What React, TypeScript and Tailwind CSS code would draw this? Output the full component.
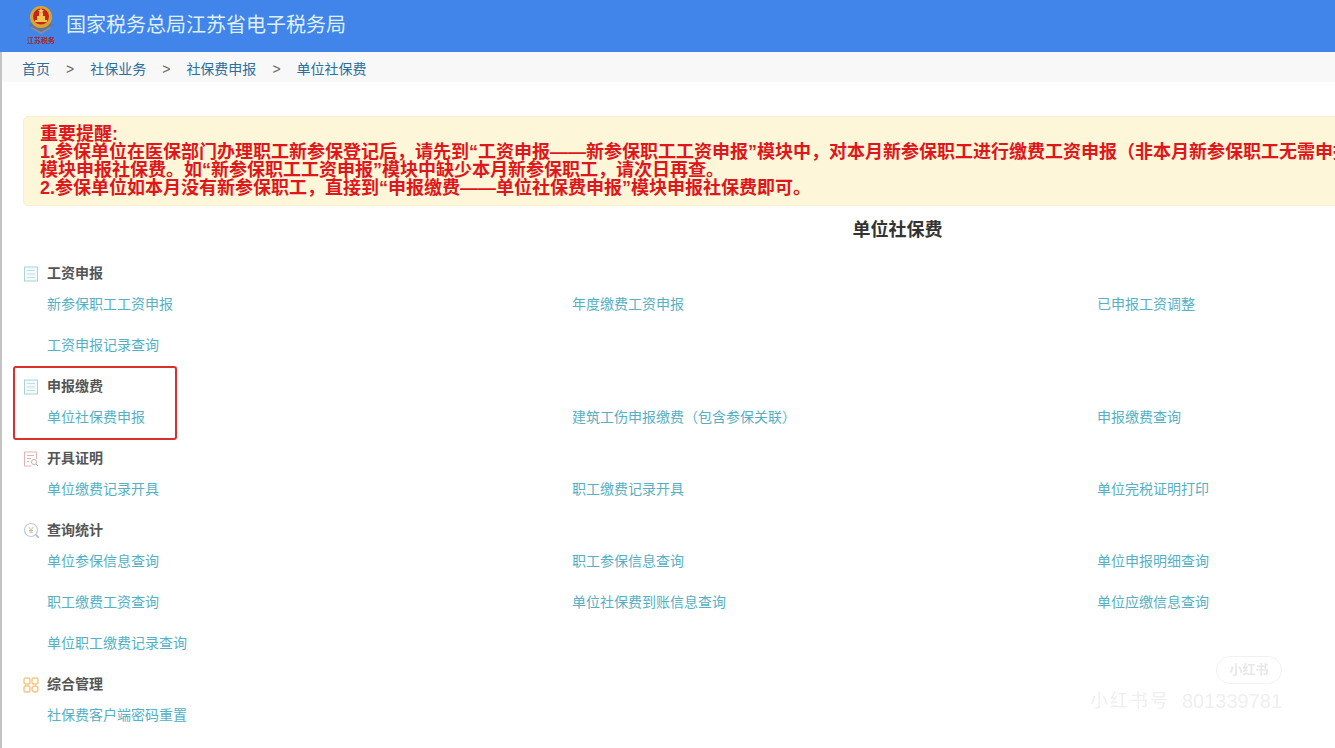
const fontStack = { fontFamily: '"Liberation Sans", "Noto Sans CJK SC", sans-serif' };

type Section = {
  title: string;
  icon: 'list' | 'cert' | 'search' | 'grid';
  links: string[];
};

const sections: Section[] = [
  {
    title: '工资申报',
    icon: 'list',
    links: ['新参保职工工资申报', '年度缴费工资申报', '已申报工资调整', '工资申报记录查询'],
  },
  {
    title: '申报缴费',
    icon: 'list',
    links: ['单位社保费申报', '建筑工伤申报缴费（包含参保关联）', '申报缴费查询'],
  },
  {
    title: '开具证明',
    icon: 'cert',
    links: ['单位缴费记录开具', '职工缴费记录开具', '单位完税证明打印'],
  },
  {
    title: '查询统计',
    icon: 'search',
    links: [
      '单位参保信息查询',
      '职工参保信息查询',
      '单位申报明细查询',
      '职工缴费工资查询',
      '单位社保费到账信息查询',
      '单位应缴信息查询',
      '单位职工缴费记录查询',
    ],
  },
  {
    title: '综合管理',
    icon: 'grid',
    links: ['社保费客户端密码重置'],
  },
];

function SectionIcon({ type }: { type: Section['icon'] }) {
  if (type === 'list') {
    return (
      <svg width="16" height="16" viewBox="0 0 16 16" fill="none" stroke="#a9d3d6" strokeWidth="1">
        <rect x="1.5" y="1" width="13" height="14" fill="#f3fafa" />
        <path d="M4 4.5h8M4 8h8M4 11.5h8" stroke="#c3dfe1" />
      </svg>
    );
  }
  if (type === 'cert') {
    return (
      <svg width="16" height="16" viewBox="0 0 16 16" fill="none" stroke="#e2b3b0" strokeWidth="1">
        <path d="M13.5 8V1H1.5v14h7" />
        <path d="M4 4.5h7M4 7.5h4M4 10.5h2" />
        <circle cx="11" cy="11" r="2.5" stroke="#d2a6a6" />
        <path d="M13 13l2 2" stroke="#b9a4a4" />
      </svg>
    );
  }
  if (type === 'search') {
    return (
      <svg width="17" height="17" viewBox="0 0 17 17" fill="none" stroke="#bccbdc" strokeWidth="1.2">
        <circle cx="8" cy="8" r="6.5" />
        <path d="M12.8 12.8l3 3" strokeWidth="1.6" stroke="#a9b7c6" />
        <path d="M5.8 5l2.2 3 2.2-3M8 8v3.5M6 8.5h4M6 10h4" stroke="#d3bb9a" strokeWidth="0.9" />
      </svg>
    );
  }
  return (
    <svg width="16" height="16" viewBox="0 0 16 16" fill="none" stroke="#f3c680" strokeWidth="1.4">
      <rect x="1" y="1" width="6" height="6" rx="1.5" />
      <rect x="9" y="1" width="6" height="6" rx="1.5" />
      <rect x="1" y="9" width="6" height="6" rx="1.5" />
      <circle cx="12" cy="12" r="3" />
    </svg>
  );
}

function Logo() {
  return (
    <div className="flex w-[30px] flex-col items-center">
      <svg width="30" height="31" viewBox="0 0 30 31">
        <path d="M5 23l10 6 10-6-2-3H7z" fill="#8b8f9c" />
        <path d="M2 20l6-3 7 5 7-5 6 3-13 7z" fill="#6d7488" />
        <circle cx="15" cy="12" r="11" fill="#d9a531" />
        <circle cx="15" cy="11.5" r="8" fill="#c8221f" />
        <path d="M9 15h12v2H9z" fill="#f1c74e" />
        <path d="M11 11h8v4h-8zM13 8h4v3h-4z" fill="#f1c74e" />
        <path d="M15 3l1 2 2 .2-1.5 1.4.4 2-1.9-1-1.9 1 .4-2L12 5.2l2-.2z" fill="#f4d35e" />
      </svg>
      <span className="mt-px text-[7px] leading-[8px] font-bold whitespace-nowrap text-[#a5262c]">江苏税务</span>
    </div>
  );
}

export default function App() {
  return (
    <div className="relative h-[748px] w-[1335px] overflow-hidden bg-white" style={fontStack}>
      <header className="flex h-[52px] items-start bg-[#4285ea] pt-[5px] pl-[26px]">
        <Logo />
        <h1 className="mt-[6px] ml-[10px] text-[20px] leading-[28px] text-[#dff0f4]">国家税务总局江苏省电子税务局</h1>
      </header>

      <div className="h-[696px] border-l-2 border-[#c4c4c4]">
        <nav className="flex h-[30px] items-center bg-[#f8f8f8] pt-[4px] pl-5 text-sm text-[#2a6f9e]">
          <span>首页</span>
          <span className="mx-[16px] text-[#666]">&gt;</span>
          <span>社保业务</span>
          <span className="mx-[16px] text-[#666]">&gt;</span>
          <span>社保费申报</span>
          <span className="mx-[16px] text-[#666]">&gt;</span>
          <span>单位社保费</span>
        </nav>

        <main className="w-[1770px] pt-[34px] pl-[21px]">
          <div className="h-[90px] rounded-[5px] border border-[#f7efcf] bg-[#fdf6d8] pt-[8px] pl-4 text-[18px] leading-[18px] font-bold whitespace-nowrap text-[#e0161b]">
            重要提醒:
            <br />
            1.参保单位在医保部门办理职工新参保登记后，请先到“工资申报——新参保职工工资申报”模块中，对本月新参保职工进行缴费工资申报（非本月新参保职工无需申报）
            <br />
            模块申报社保费。如“新参保职工工资申报”模块中缺少本月新参保职工，请次日再查。
            <br />
            2.参保单位如本月没有新参保职工，直接到“申报缴费——单位社保费申报”模块申报社保费即可。
          </div>

          <h2 className="mt-[11px] h-[26px] text-center text-[18px] leading-[26px] font-bold text-[#333]">单位社保费</h2>

          <div className="mt-[20px] flex flex-col gap-5">
            {sections.map((section) => (
              <section key={section.title}>
                <div className="mb-[10px] flex h-[21px] items-center">
                  <span className="flex w-[24px] items-center">
                    <SectionIcon type={section.icon} />
                  </span>
                  <h3 className="text-sm leading-[21px] font-bold text-[#555]">{section.title}</h3>
                </div>
                <div className="grid w-[1599px] grid-cols-3 gap-y-5 pl-[24px]">
                  {section.links.map((link) => (
                    <a key={link} className="h-[21px] text-sm leading-[21px] text-[#55b0c4]">
                      {link}
                    </a>
                  ))}
                </div>
              </section>
            ))}
          </div>
        </main>
      </div>

      {/* red annotation drawn over the page */}
      <div className="absolute top-[366px] left-[13px] h-[74px] w-[164px] rounded-[3px] border-2 border-[#d9302c]" />

      {/* watermark */}
      <div className="absolute top-[656px] left-[1216px] flex h-[28px] w-[66px] items-center justify-center rounded-[14px] border border-[#f1f1f1] text-[13px] font-bold text-[#e8e8e8] blur-[0.5px]">
        小红书
      </div>
      <div className="absolute top-[690px] left-[1090px] flex items-center gap-3 leading-[22px] whitespace-nowrap text-[#efefef] blur-[0.5px]">
        <span className="text-[18px] tracking-[2px]">小红书号</span>
        <span className="text-[20px]">801339781</span>
      </div>
    </div>
  );
}
